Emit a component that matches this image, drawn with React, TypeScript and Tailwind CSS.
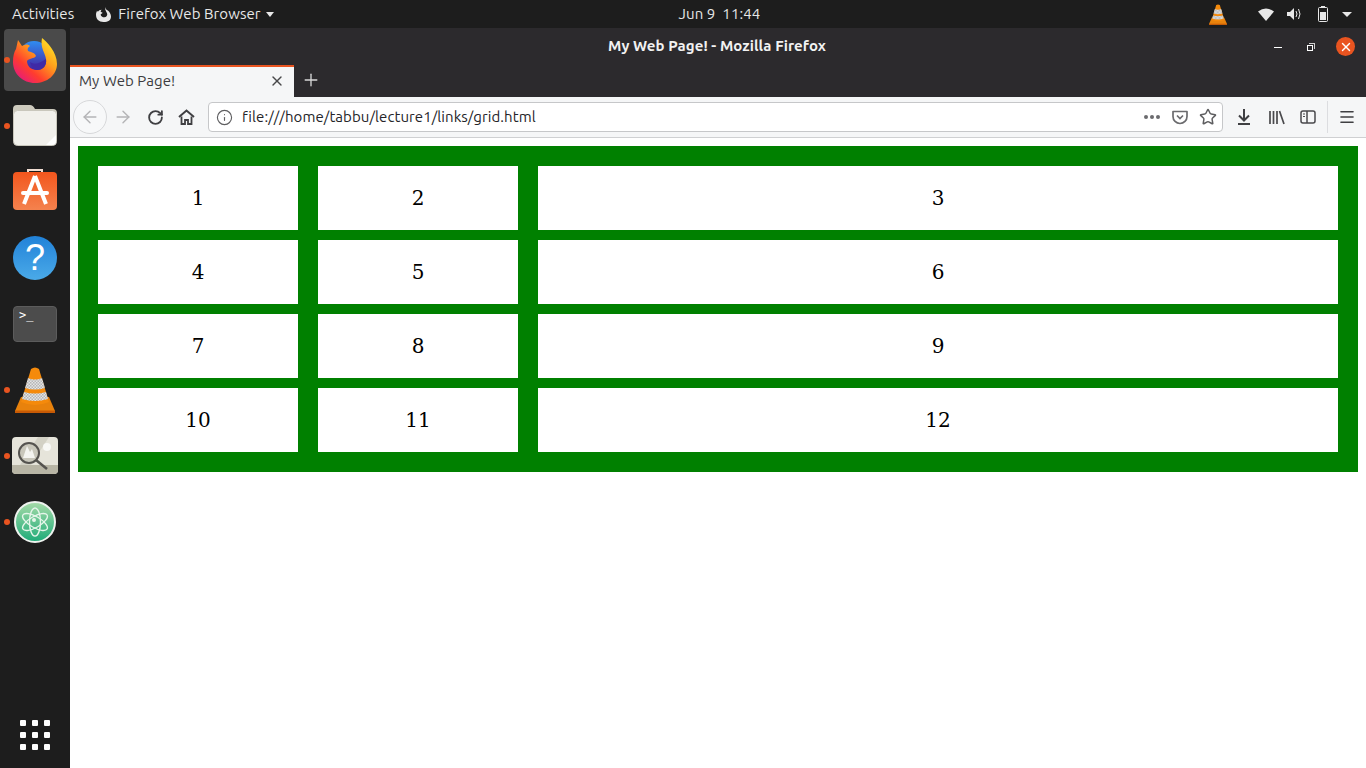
import { ArrowLeft, ArrowRight, Info, Menu, Plus, RotateCw, Star, X } from "lucide-react"

const ui = "font-['Ubuntu','Noto_Sans',sans-serif] tracking-[0.07px]"
const cells = [1, 2, 3, 4, 5, 6, 7, 8, 9, 10, 11, 12]

function FirefoxIcon() {
  return (
    <svg width="44" height="46" viewBox="0 0 44 46">
      <defs>
        <linearGradient id="ffBody" x1="0.9" y1="0.1" x2="0.15" y2="0.95">
          <stop offset="0" stopColor="#ffe226" />
          <stop offset="0.35" stopColor="#ffa01c" />
          <stop offset="0.7" stopColor="#ff3d2e" />
          <stop offset="1" stopColor="#e6197e" />
        </linearGradient>
        <linearGradient id="ffGlobe" x1="0.5" y1="0" x2="0.5" y2="1">
          <stop offset="0" stopColor="#2f8df2" />
          <stop offset="1" stopColor="#46209c" />
        </linearGradient>
      </defs>
      <circle cx="21" cy="19" r="15" fill="url(#ffGlobe)" />
      <path
        d="M29 1C34 5 44 15 44 27C44 38 34 46 22 46C10 46 0 37 0 25C0 19 1 15 3 12L5 3L9 9C12 7 15 7 17 9C15 10 14 12 15 14C18 15 22 16 23 19C21 22 16 21 14 24C14 29 18 33 24 33C30 33 34 29 33 22C32 15 27 11 29 1Z"
        fill="url(#ffBody)"
      />
      <path d="M17 25C21 28 26 27 33 22C34 28 30 33 24 33C20 33 18 29 17 25Z" fill="#3f2aa6" />
    </svg>
  )
}

function FilesIcon() {
  return (
    <svg className="mb-[2px]" width="44" height="42" viewBox="0 0 44 42">
      <path d="M0 5q0-4 4-4h13q3 0 5 4h18q4 0 4 4v6H0z" fill="#cdcabd" />
      <rect x="0.500" y="6.500" width="43" height="35" rx="4" fill="#f1f0eb" stroke="#c9c7bc" />
      <path d="M33 41l10-10v6q0 4-4 4z" fill="#ffffff" />
    </svg>
  )
}

function SoftwareIcon() {
  return (
    <svg className="mb-[4px]" width="44" height="42" viewBox="0 0 44 42">
      <defs>
        <linearGradient id="swBg" x1="0" y1="0" x2="0" y2="1">
          <stop offset="0" stopColor="#f2561d" />
          <stop offset="1" stopColor="#f4824e" />
        </linearGradient>
      </defs>
      <path d="M15 5V1h14v4" fill="none" stroke="#f0ddd2" strokeWidth="2" />
      <rect x="0" y="3" width="44" height="38" rx="4" fill="url(#swBg)" />
      <path d="M22 7L11 35M22 7l11 28" stroke="#fff" strokeWidth="4" fill="none" />
      <rect x="8" y="22" width="28" height="4" rx="2" fill="#fff" />
    </svg>
  )
}

function HelpIcon() {
  return (
    <div className="w-[44px] h-[44px] rounded-full bg-gradient-to-b from-[#2182d8] to-[#4aaae8] flex items-center justify-center">
      <span className="text-white text-[36px] leading-none font-['Liberation_Sans',sans-serif]">?</span>
    </div>
  )
}

function TerminalIcon() {
  return (
    <div className="w-[44px] h-[36px] rounded-[4px] bg-[#4c4c4c] border border-[#5c5c5c] px-[5px] pt-[1px] text-white text-[12px] leading-[14px] font-['DejaVu_Sans_Mono',monospace]">
      &gt;_
    </div>
  )
}

function ConeIcon({ w = 40, h = 46, id = "coneA" }: { w?: number; h?: number; id?: string }) {
  return (
    <svg width={w} height={h} viewBox="0 0 40 46">
      <defs>
        <pattern id={id} width="3" height="3" patternUnits="userSpaceOnUse">
          <rect width="3" height="3" fill="#e4e4e4" />
          <rect width="1.500" height="1.500" fill="#b5b5b5" />
          <rect x="1.500" y="1.500" width="1.500" height="1.500" fill="#b5b5b5" />
        </pattern>
      </defs>
      <path d="M0 44L6 30h28l6 14-1 2H1z" fill="#e8820c" />
      <path d="M16 2Q20-1 24 2l10 33q-14 6-28 0z" fill="#f58a0b" />
      <path d="M13 11q7 3 14 0l3 10q-10 3-20 0z" fill={`url(#${id})`} />
      <path d="M9 25q11 3 22 0l2 7q-13 4-26 0z" fill={`url(#${id})`} />
      <rect x="0" y="43.500" width="40" height="2.500" fill="#c75a05" />
    </svg>
  )
}

function ScreenshotIcon() {
  return (
    <svg className="mb-[2px]" width="46" height="37" viewBox="0 0 46 37">
      <rect x="0" y="0" width="46" height="37" rx="4" fill="#e6e4da" />
      <path d="M0 28h46v5q0 4-4 4H4q-4 0-4-4z" fill="#b8b5a5" />
      <path d="M26 0h11L19 28H8z" fill="#d3d1c5" />
      <circle cx="35" cy="10" r="4" fill="#f8f8f5" />
      <circle cx="17" cy="16" r="10" fill="#c9c7bb" stroke="#55534f" strokeWidth="2" />
      <path d="M11 21l4-12 3 6 2-3 3 9z" fill="#f4f4f0" />
      <path d="M24 23l11 9" stroke="#55534f" strokeWidth="2.500" />
    </svg>
  )
}

function AtomIcon() {
  return (
    <svg width="42" height="42" viewBox="0 0 42 42">
      <defs>
        <linearGradient id="atomBg" x1="0" y1="0" x2="0" y2="1">
          <stop offset="0" stopColor="#a6dba8" />
          <stop offset="1" stopColor="#1dab78" />
        </linearGradient>
      </defs>
      <circle cx="21" cy="21" r="20" fill="url(#atomBg)" stroke="#eef2ee" strokeWidth="2" />
      <g fill="none" stroke="#e6f5ea" strokeWidth="1.400">
        <ellipse cx="21" cy="21" rx="14" ry="5.500" transform="rotate(30 21 21)" />
        <ellipse cx="21" cy="21" rx="14" ry="5.500" transform="rotate(-30 21 21)" />
        <ellipse cx="21" cy="21" rx="14" ry="5.500" transform="rotate(90 21 21)" />
      </g>
      <circle cx="20" cy="19" r="2" fill="#e6f5ea" />
    </svg>
  )
}

function DockItem({ running, active, children }: { running?: boolean; active?: boolean; children: React.ReactNode }) {
  return (
    <div className={`relative w-[62px] h-[62px] rounded-[4px] flex items-center justify-center ${active ? "bg-[#4a4a4a]" : ""}`}>
      {running && <span className="absolute left-0 top-[28px] w-[6px] h-[6px] rounded-full bg-[#e95420]" />}
      {children}
    </div>
  )
}

function Dock() {
  return (
    <aside className="w-[70px] shrink-0 bg-[#1d1d1d] flex flex-col items-center gap-1 pt-[1px]">
      <DockItem running active><FirefoxIcon /></DockItem>
      <DockItem running><FilesIcon /></DockItem>
      <DockItem><SoftwareIcon /></DockItem>
      <DockItem><HelpIcon /></DockItem>
      <DockItem><TerminalIcon /></DockItem>
      <DockItem running><ConeIcon /></DockItem>
      <DockItem running><ScreenshotIcon /></DockItem>
      <DockItem running><AtomIcon /></DockItem>
      <div className="mt-auto mb-[18px] grid grid-cols-3 gap-[6px]">
        {Array.from({ length: 9 }).map((_, i) => (
          <span key={i} className="w-[6px] h-[6px] bg-white rounded-[1px]" />
        ))}
      </div>
    </aside>
  )
}

function TopBar() {
  return (
    <header className={`h-[28px] shrink-0 bg-[#1d1d1d] text-[#e8e8e8] text-[15px] flex items-center ${ui}`}>
      <span className="ml-[12px]">Activities</span>
      <svg className="ml-[22px]" width="15" height="15" viewBox="0 0 16 16">
        <path d="M10 0c0 2 1 3 3 4 3 3 3 6 3 6 0 4-3 6-8 6s-8-3-8-8c0-2 1-3 1-4l1 1c1-1 2-2 4-2-1 1-1 2-1 2l2 1c0 1-2 1-2 2 0 2 2 3 4 3s3-2 3-3c0-3-3-4-2-8z" fill="#e8e8e8" />
      </svg>
      <span className="ml-[7px]">Firefox Web Browser</span>
      <span className="ml-[5px] w-0 h-0 border-x-[4.500px] border-x-transparent border-t-[5px] border-t-[#e8e8e8]" />
      <span className="ml-[405px]">Jun 9&nbsp;&nbsp;11:44</span>
      <span className="ml-auto"><ConeIcon w={18} h={21} id="coneB" /></span>
      <svg className="ml-[31px]" width="16" height="13" viewBox="0 0 16 13">
        <path d="M0 3.500Q8-2.500 16 3.500L8 13z" fill="#e8e8e8" />
      </svg>
      <svg className="ml-[13px]" width="16" height="14" viewBox="0 0 16 14">
        <path d="M0 5h3l4-4v12l-4-4H0z" fill="#e8e8e8" />
        <path d="M9 4q2 3 0 6M11.500 2q3 5 0 10" stroke="#e8e8e8" strokeWidth="1" fill="none" />
      </svg>
      <svg className="ml-[14px]" width="12" height="16" viewBox="0 0 12 16">
        <rect x="4" y="0" width="4" height="2" fill="#e8e8e8" />
        <rect x="1.500" y="1.500" width="9" height="14" rx="1" fill="none" stroke="#e8e8e8" />
        <rect x="3" y="6" width="6" height="8" fill="#e8e8e8" />
      </svg>
      <span className="ml-[13px] mr-[14px] w-0 h-0 border-x-[5px] border-x-transparent border-t-[5px] border-t-[#e8e8e8]" />
    </header>
  )
}

function WindowTitle() {
  return (
    <div className={`h-[37px] shrink-0 bg-[#2c2a2d] flex items-center relative ${ui}`}>
      <span className="flex-1 text-center text-[15px] font-bold text-[#f2f2f2] -ml-[2px]">My Web Page! - Mozilla Firefox</span>
      <div className="absolute right-[11px] top-[9px] flex items-center">
        <span className="w-[8px] h-[1px] bg-white mt-[1px]" />
        <span className="ml-[25px] relative w-[8px] h-[8px]">
          <span className="absolute left-[2px] top-0 w-[6px] h-[6px] border-t border-r border-[#cfcfcf]" />
          <span className="absolute left-0 top-[2px] w-[6px] h-[6px] border border-white" />
        </span>
        <span className="ml-[21px] w-[19px] h-[19px] rounded-full bg-[#e95420] flex items-center justify-center">
          <X size={14} color="#ffffff" strokeWidth={2.500} />
        </span>
      </div>
    </div>
  )
}

function TabBar() {
  return (
    <div className={`h-[32px] shrink-0 bg-[#2c2a2d] flex ${ui}`}>
      <div className="w-[224px] bg-[#f5f6f7] border-t-2 border-[#e95420] flex items-center pl-[9px] pr-[9px] pb-[2px] text-[15px] text-[#3c3c3f]">
        <span className="flex-1">My Web Page!</span>
        <X size={16} color="#48484a" strokeWidth={2} />
      </div>
      <div className="w-[34px] flex items-center justify-center pb-[2px]">
        <Plus size={20} color="#d8d8d8" strokeWidth={1.600} />
      </div>
    </div>
  )
}

function NavBar() {
  return (
    <div className={`h-[41px] shrink-0 bg-[#f5f6f7] border-b border-[#cfd0d2] flex items-center ${ui}`}>
      <div className="ml-[3px] w-[34px] h-[34px] rounded-full bg-[#f7f8f9] border border-[#d7d8da] flex items-center justify-center">
        <ArrowLeft size={20} color="#b4b4b6" strokeWidth={1.700} />
      </div>
      <ArrowRight className="ml-[6px]" size={20} color="#b4b4b6" strokeWidth={1.700} />
      <RotateCw className="ml-[14px]" size={17} color="#3f3f42" strokeWidth={2.600} />
      <svg className="ml-[14px]" width="17" height="16" viewBox="0 0 17 16">
        <path d="M1 8L8.500 1.500 16 8" fill="none" stroke="#3f3f42" strokeWidth="2" />
        <path d="M3.500 7.500V15H7v-4h3v4h3.500V7.500" fill="none" stroke="#3f3f42" strokeWidth="1.800" />
      </svg>
      <div className="ml-[13px] w-[1015px] h-[30px] bg-white rounded-[4px] border border-[#c6c7c9] flex items-center text-[15px] text-[#242428]">
        <Info className="ml-[7px]" size={17} color="#5e5e60" strokeWidth={1.600} />
        <span className="ml-[9px] pt-[1px] flex-1">file:///home/tabbu/lecture1/links/grid.html</span>
        <span className="flex gap-[2px]">
          <i className="w-[4px] h-[4px] rounded-full bg-[#6b6b6e]" />
          <i className="w-[4px] h-[4px] rounded-full bg-[#6b6b6e]" />
          <i className="w-[4px] h-[4px] rounded-full bg-[#6b6b6e]" />
        </span>
        <svg className="ml-[12px]" width="16" height="15" viewBox="0 0 16 15">
          <path d="M1 1.500h14v5a7 7 0 0 1-14 0z" fill="none" stroke="#6b6b6e" strokeWidth="1.700" strokeLinejoin="round" />
          <path d="M5 5.500l3 3 3-3" fill="none" stroke="#6b6b6e" strokeWidth="1.700" />
        </svg>
        <Star className="ml-[11px] mr-[5px]" size={18} color="#5e5e60" strokeWidth={2} />
      </div>
      <svg className="ml-[14px]" width="14" height="16" viewBox="0 0 14 16">
        <path d="M7 0v11M2 6.500L7 11.500l5-5" fill="none" stroke="#3f3f42" strokeWidth="2" />
        <path d="M1 15h12" stroke="#3f3f42" strokeWidth="2" />
      </svg>
      <svg className="ml-[18px]" width="16" height="15" viewBox="0 0 16 15">
        <path d="M1 1v13M4.500 1v13M8 1v13M10.500 1l4.500 13" stroke="#4a4a4d" strokeWidth="1.700" fill="none" />
      </svg>
      <svg className="ml-[15px]" width="16" height="14" viewBox="0 0 16 14">
        <rect x="1" y="1" width="14" height="12" rx="2" fill="none" stroke="#4a4a4d" strokeWidth="1.500" />
        <path d="M7 1v12" stroke="#4a4a4d" strokeWidth="1.500" />
        <path d="M3 4h2M3 6.500h2" stroke="#4a4a4d" />
      </svg>
      <span className="ml-[11px] w-[1px] h-[32px] bg-[#dcdde0]" />
      <Menu className="ml-[10px]" size={18} color="#3f3f42" strokeWidth={2.200} />
    </div>
  )
}

export default function App() {
  return (
    <div className="w-[1366px] h-[768px] overflow-hidden flex flex-col bg-white">
      <TopBar />
      <div className="flex-1 flex min-h-0">
        <Dock />
        <main className="flex-1 flex flex-col min-w-0">
          <WindowTitle />
          <TabBar />
          <NavBar />
          <div className="flex-1 bg-white pt-[8px] pl-[8px] pr-[8px]">
            <div className="grid grid-cols-[200px_200px_800px] gap-x-[20px] gap-y-[10px] p-[20px] bg-[#008000]">
              {cells.map((n) => (
                <div key={n} className="h-[64px] bg-white flex items-center justify-center text-[20px] text-black font-['DejaVu_Serif',serif]">
                  {n}
                </div>
              ))}
            </div>
          </div>
        </main>
      </div>
    </div>
  )
}
